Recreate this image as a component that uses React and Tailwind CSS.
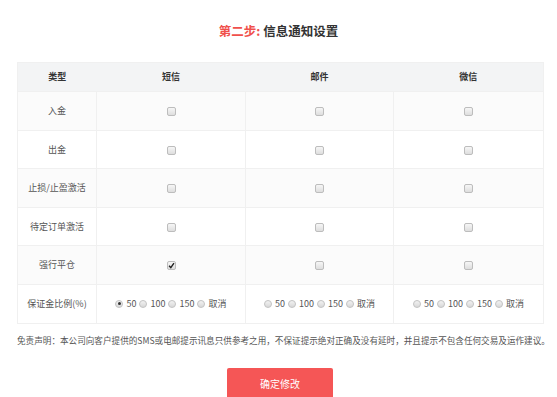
import { useState } from "react";

// ─── Small form controls, drawn to match the old gray-gradient look ─────────

function Box({ checked, onClick }) {
  return (
    <span
      onClick={onClick}
      className="inline-flex items-center justify-center w-[9px] h-[9px] rounded-[2px] border border-[#bdbdbd] bg-gradient-to-b from-[#f6f6f6] to-[#dedede] cursor-pointer align-middle"
    >
      {checked && (
        <svg viewBox="0 0 10 10" className="w-[7px] h-[7px]">
          <path d="M1.5 5.5 L4 8 L8.5 1.5" fill="none" stroke="#222" strokeWidth="2" />
        </svg>
      )}
    </span>
  );
}

function Radio({ checked, onClick }) {
  return (
    <span
      onClick={onClick}
      className="inline-flex items-center justify-center w-[8px] h-[8px] rounded-full border border-[#c4c4c4] bg-gradient-to-b from-[#f2f2f2] to-[#d8d8d8] cursor-pointer"
    >
      {checked && <span className="w-[3px] h-[3px] rounded-full bg-[#333]" />}
    </span>
  );
}

const RATIOS = ["50", "100", "150", "取消"];

function RatioGroup({ value, onChange }) {
  return (
    <div className="flex items-center justify-center gap-[3px]">
      {RATIOS.map((r) => (
        <label key={r} className="flex items-center gap-[3px] cursor-pointer">
          <Radio checked={value === r} onClick={() => onChange(r)} />
          <span>{r}</span>
        </label>
      ))}
    </div>
  );
}

const ROWS = ["入金", "出金", "止损/止盈激活", "待定订单激活", "强行平仓"];
const CHANNELS = ["短信", "邮件", "微信"];

export default function App() {
  const [checks, setChecks] = useState({ "强行平仓-短信": true });
  const [ratio, setRatio] = useState({ 短信: "50", 邮件: null, 微信: null });

  const toggle = (k) => setChecks((c) => ({ ...c, [k]: !c[k] }));

  return (
    <div
      className="w-[557px] h-[397px] overflow-hidden bg-white text-[#555]"
      style={{ fontFamily: '"Noto Sans CJK SC", "Noto Sans", sans-serif' }}
    >
      <h2 className="pt-[21px] h-[62px] text-center text-[12.5px] font-bold text-[#333] leading-[20px]">
        <span className="text-[#f0504c]">第二步:</span> 信息通知设置
      </h2>

      <table className="ml-[17px] w-[526px] border-collapse table-fixed text-[9px]">
        <colgroup>
          <col className="w-[79px]" />
          <col className="w-[149px]" />
          <col className="w-[148px]" />
          <col className="w-[150px]" />
        </colgroup>
        <thead>
          <tr className="h-[29px] bg-[#f3f4f5] text-[#333] font-bold">
            <th className="border-t border-l border-[#f0f0f0] font-bold">类型</th>
            {CHANNELS.map((ch) => (
              <th key={ch} className="border-t border-[#f0f0f0] last:border-r font-bold">
                {ch}
              </th>
            ))}
          </tr>
        </thead>
        <tbody>
          {ROWS.map((row, i) => (
            <tr key={row} className={i % 2 === 0 ? "h-[38.5px] bg-[#fbfbfb]" : "h-[38.5px] bg-white"}>
              <td className="border border-[#f0f0f0] text-center">{row}</td>
              {CHANNELS.map((ch) => (
                <td key={ch} className="border border-[#f0f0f0] text-center">
                  <Box checked={!!checks[`${row}-${ch}`]} onClick={() => toggle(`${row}-${ch}`)} />
                </td>
              ))}
            </tr>
          ))}
          <tr className="h-[39px] bg-white">
            <td className="border border-[#f0f0f0] text-center">保证金比例(%)</td>
            {CHANNELS.map((ch) => (
              <td key={ch} className="border border-[#f0f0f0] text-center">
                <RatioGroup value={ratio[ch]} onChange={(v) => setRatio((r) => ({ ...r, [ch]: v }))} />
              </td>
            ))}
          </tr>
        </tbody>
      </table>

      <p className="mt-[10px] ml-[17px] text-[8.6px] leading-[12px] text-[#555] whitespace-nowrap">
        免责声明：本公司向客户提供的SMS或电邮提示讯息只供参考之用，不保证提示绝对正确及没有延时，并且提示不包含任何交易及运作建议。
      </p>

      <div className="flex justify-center mt-[22px]">
        <button className="w-[106px] h-[32px] ml-[3px] bg-[#f55656] text-white text-[10px] rounded-[2px]">
          确定修改
        </button>
      </div>
    </div>
  );
}
